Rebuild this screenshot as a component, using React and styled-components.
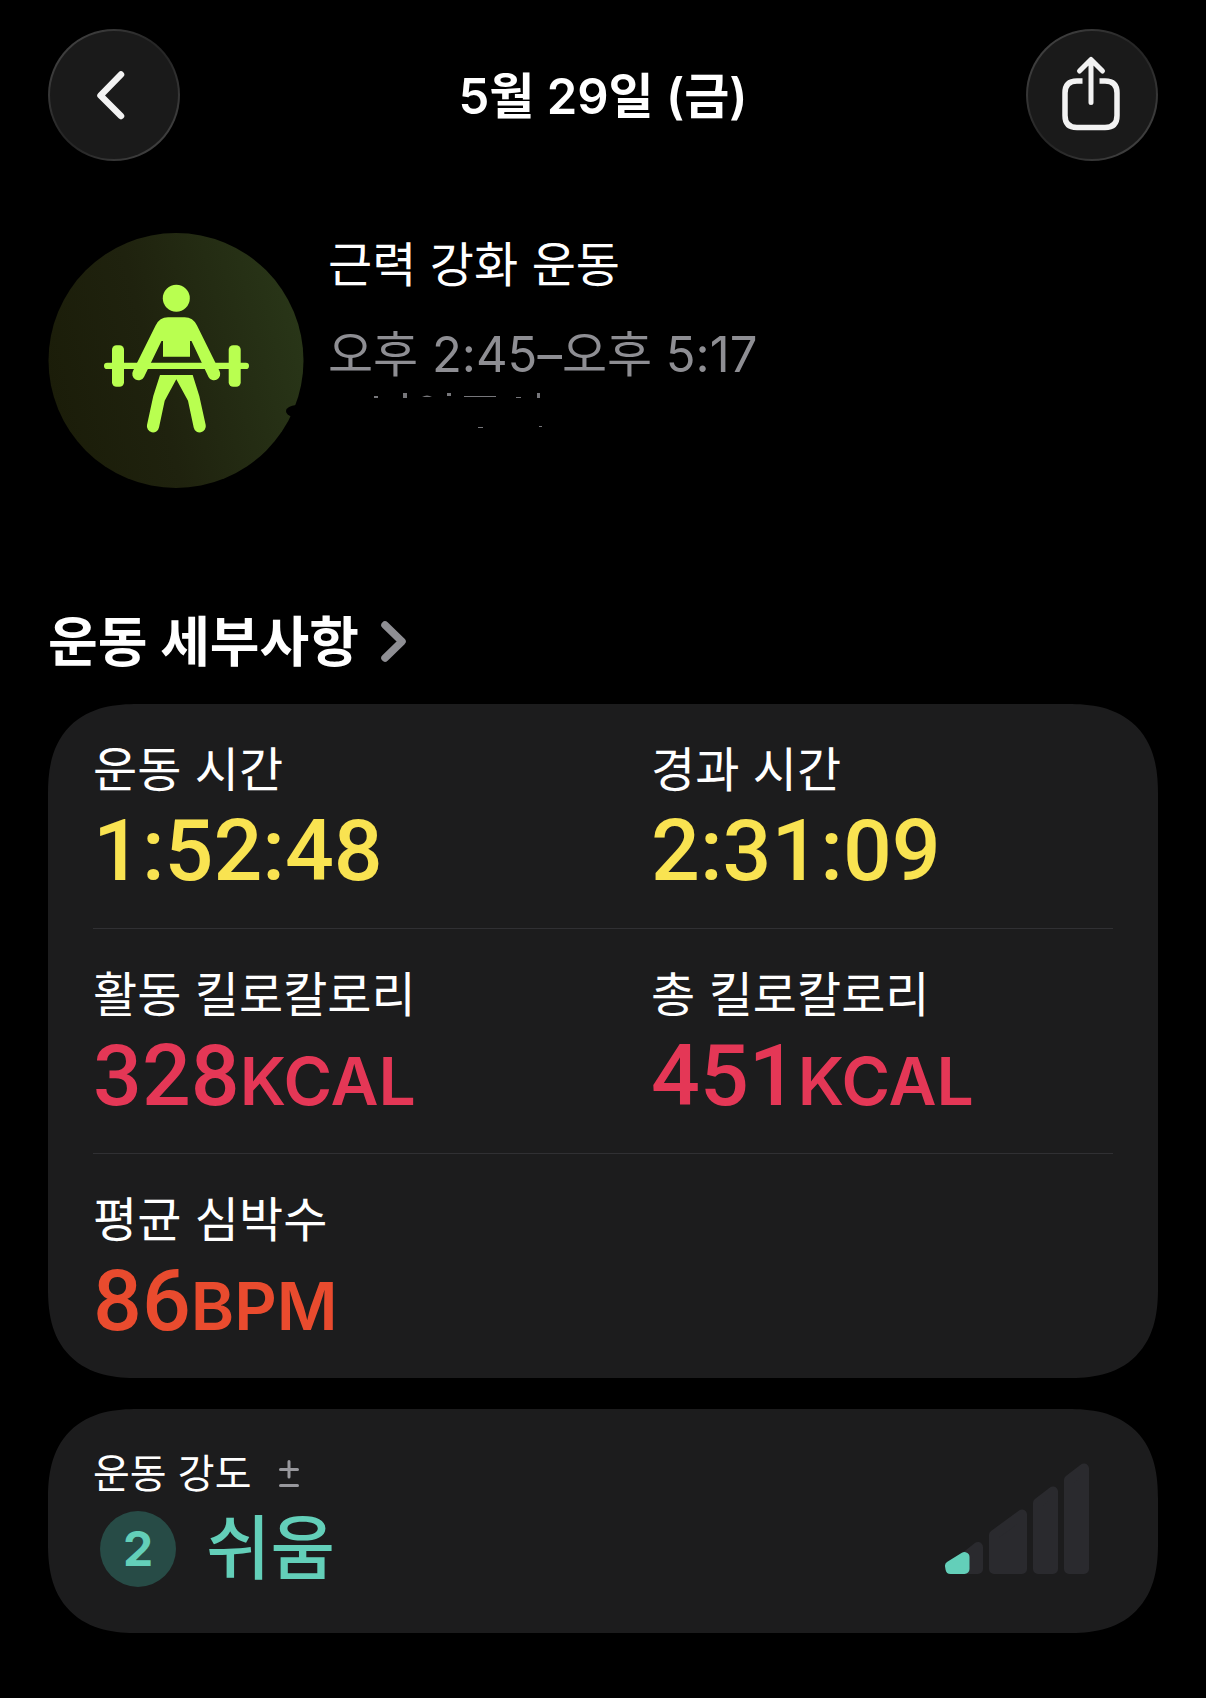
import React from 'react';
import styled, { createGlobalStyle } from 'styled-components';

const GlobalStyle = createGlobalStyle`
  * {
    box-sizing: border-box;
  }

  body {
    margin: 0;
    background: #000;
    color: #fff;
    font-family: Inter, 'Noto Sans CJK KR', sans-serif;
  }
`;

const Page = styled.div`
  padding: 29px 48px 64px;
`;

const Header = styled.header`
  display: flex;
  align-items: center;
  justify-content: space-between;
  margin-bottom: 72px;
`;

const RoundButton = styled.button`
  width: 132px;
  height: 132px;
  padding: 0;
  border: 2px solid transparent;
  border-radius: 50%;
  color: #f2f2f2;
  background:
    linear-gradient(#1a1a1a, #1a1a1a) padding-box,
    linear-gradient(135deg, #4a4a4a 0%, #262626 45%, #262626 55%, #4a4a4a 100%) border-box;
  cursor: pointer;

  svg {
    display: block;
    width: 100%;
    height: 100%;
  }
`;

const Title = styled.h1`
  margin: 0;
  padding-top: 4px;
  font-size: 49px;
  line-height: 60px;
  font-weight: 600;
`;

const Hero = styled.section`
  display: flex;
  align-items: flex-start;
  gap: 24px;
  margin-bottom: 123px;
`;

const HeroBadge = styled.svg`
  flex: none;
  width: 256px;
  height: 256px;
`;

const HeroText = styled.div`
  display: flex;
  flex-direction: column;
  padding-top: 2px;
`;

const WorkoutName = styled.h2`
  margin: 0 0 30px;
  font-size: 48px;
  line-height: 60px;
  font-weight: 400;
`;

const WorkoutTime = styled.p`
  margin: 0;
  font-size: 49px;
  line-height: 60px;
  color: #8e8e93;
`;

const HiddenPlace = styled.svg`
  width: 240px;
  height: 48px;
`;

const SectionTitle = styled.h2`
  margin: 0 0 30px;
  font-size: 54px;
  line-height: 62px;
  font-weight: 700;
`;

const SectionLink = styled.a`
  display: inline-flex;
  align-items: center;
  gap: 18px;
  color: inherit;
  text-decoration: none;
`;

const Card = styled.section`
  padding: 0 45px;
  border-radius: 74px;
  background: #1c1c1d;

  @supports (corner-shape: superellipse(1.3)) {
    border-radius: 90px;
    corner-shape: superellipse(1.3);
  }
`;

const MetricRow = styled.div`
  display: grid;
  grid-template-columns: 1fr 1fr;
  column-gap: 96px;
  padding: 36px 0 37px;

  & + & {
    border-top: 1px solid #303033;
  }
`;

const Metric = styled.dl`
  margin: 0;
`;

const MetricLabel = styled.dt`
  margin-bottom: 11px;
  font-size: 48px;
  line-height: 60px;
`;

const MetricValue = styled.dd`
  margin: 0;
  font-family: Roboto, sans-serif;
  font-size: 86px;
  line-height: 80px;
  font-weight: 500;
  white-space: nowrap;
  color: ${props => props.color};
`;

const Unit = styled.span`
  font-family: Inter, sans-serif;
  font-size: 66px;
  line-height: 1;
  font-weight: 600;
`;

const EffortCard = styled(Card)`
  display: flex;
  align-items: center;
  justify-content: space-between;
  margin-top: 31px;
  padding: 41px 69px 46px 45px;
`;

const EffortLabel = styled.div`
  display: flex;
  align-items: center;
  gap: 28px;
  margin-bottom: 13px;
  font-size: 40px;
  line-height: 48px;
`;

const EffortValue = styled.div`
  display: flex;
  align-items: center;
  gap: 30px;
  padding-left: 7px;
  font-size: 70px;
  line-height: 76px;
  font-weight: 500;
  color: #63cfb9;
`;

const EffortBadge = styled.span`
  width: 76px;
  height: 76px;
  border-radius: 50%;
  background: #274b46;
  font-size: 48px;
  font-weight: 700;
  text-align: center;
`;

const rows = [
  [
    { label: '운동 시간', value: '1:52:48', color: '#f9e351' },
    { label: '경과 시간', value: '2:31:09', color: '#f9e351' },
  ],
  [
    { label: '활동 킬로칼로리', value: '328', unit: 'KCAL', color: '#e43756' },
    { label: '총 킬로칼로리', value: '451', unit: 'KCAL', color: '#e43756' },
  ],
  [{ label: '평균 심박수', value: '86', unit: 'BPM', color: '#e94b2e' }],
];

const BackIcon = () => (
  <svg viewBox="2 2 128 128" fill="none" stroke="currentColor" strokeWidth="6.5" strokeLinecap="round" strokeLinejoin="round">
    <path d="M73 45.5 52.5 66.5 73 87" />
  </svg>
);

const ShareIcon = () => (
  <svg viewBox="2 2 128 128" fill="none" stroke="currentColor" strokeWidth="5.5">
    <path d="M56.500 52H51Q39 52 39 64V86.500Q39 98.500 51 98.500H79Q91 98.500 91 86.500V64Q91 52 79 52H73.500" />
    <path d="M65 73.500V31M53.500 42 65 30.500 76.500 42" strokeWidth="5" strokeLinecap="round" strokeLinejoin="round" />
  </svg>
);

const LifterBadge = () => (
  <HeroBadge viewBox="0 0 256 256" role="img" aria-label="근력 강화 운동">
    <defs>
      <linearGradient id="lifterBg" x1="0" y1="0.6" x2="1" y2="0.35">
        <stop offset="0" stopColor="#1b1d09" />
        <stop offset="0.4" stopColor="#1f220e" />
        <stop offset="1" stopColor="#293618" />
      </linearGradient>
    </defs>
    <circle cx="128" cy="127.500" r="127.500" fill="url(#lifterBg)" />
    <g fill="#b9ff50">
      <circle cx="128.300" cy="65.300" r="13.500" />
      <path d="M120 84.300H136.600Q145 84.300 149 92.500L171.500 138A6.200 6.200 0 0 1 160.500 144L143.500 108H142V123.700H115V108H113.500L96 144A6.200 6.200 0 0 1 85 138L107.600 92.500Q111.600 84.300 120 84.300Z" />
      <rect x="56" y="129.700" width="145" height="6.300" rx="3.100" />
      <rect x="64" y="112.300" width="12" height="41.400" rx="4.500" />
      <rect x="180.700" y="112.300" width="12" height="41.400" rx="4.500" />
      <path d="M112 142H144.700L151.300 163L157.700 192A6.100 6.100 0 0 1 145.700 194.500L140 167.700 128.300 146.300 116.700 167.700 111 194.500A6.100 6.100 0 0 1 99 192L105.300 163Z" />
    </g>
    <path d="M256 172Q244 171 238.500 176Q236.500 180 242 183L256 186Z" fill="#000" />
  </HeroBadge>
);

// location line, painted over except for a few marks along its edges
const PlaceMarks = () => (
  <HiddenPlace viewBox="0 4 240 48" fill="#77777b" aria-hidden="true">
    <rect x="46" y="15" width="4" height="2" />
    <rect x="75" y="12" width="4" height="5" />
    <path d="M94 16Q99 13 104 16Z" />
    <rect x="119" y="12" width="4" height="3" />
    <rect x="136" y="15" width="32" height="1" />
    <rect x="188" y="16" width="5" height="1" />
    <rect x="209" y="12" width="3" height="5" />
    <rect x="150" y="46" width="5" height="1" />
    <rect x="211" y="45" width="3" height="1" />
  </HiddenPlace>
);

const ChevronIcon = () => (
  <svg width="32" height="48" viewBox="0 0 32 48" fill="none" stroke="#8e8e93" strokeWidth="7.500" strokeLinecap="round" strokeLinejoin="round">
    <path d="M8 6 25 22.500 8 39" />
  </svg>
);

const PlusMinusIcon = () => (
  <svg width="20" height="28" viewBox="0 0 20 28" stroke="#98989d" strokeWidth="3" strokeLinecap="round">
    <path d="M10 1.500V17M1.500 9.500H18.500M1.500 25.500H18.500" />
  </svg>
);

const EffortChart = () => (
  <svg width="144" height="112" viewBox="0 0 144 112" strokeWidth="10" strokeLinejoin="round" aria-hidden="true">
    <g fill="#2a2a2e" stroke="#2a2a2e">
      <path d="M8 104 33 84V106H10Z" />
      <path d="M49 72 77 51.500V106H49Z" />
      <path d="M93 40 108 28.500V106H93Z" />
      <path d="M124 17 139 5.500V106H124Z" />
    </g>
    <path d="M5 103 19.500 94V106H5.500Z" fill="#63cfb9" stroke="#63cfb9" />
  </svg>
);

const App = () => (
  <>
    <GlobalStyle />
    <Page>
      <Header>
        <RoundButton type="button" aria-label="뒤로">
          <BackIcon />
        </RoundButton>
        <Title>5월 29일 (금)</Title>
        <RoundButton type="button" aria-label="공유">
          <ShareIcon />
        </RoundButton>
      </Header>

      <main>
        <Hero>
          <LifterBadge />
          <HeroText>
            <WorkoutName>근력 강화 운동</WorkoutName>
            <WorkoutTime>오후 2:45–오후 5:17</WorkoutTime>
            <PlaceMarks />
          </HeroText>
        </Hero>

        <SectionTitle>
          <SectionLink href="#details">
            운동 세부사항
            <ChevronIcon />
          </SectionLink>
        </SectionTitle>

        <Card id="details">
          {rows.map((row, i) => (
            <MetricRow key={i}>
              {row.map(({ label, value, unit, color }) => (
                <Metric key={label}>
                  <MetricLabel>{label}</MetricLabel>
                  <MetricValue color={color}>
                    {value}
                    {unit && <Unit>{unit}</Unit>}
                  </MetricValue>
                </Metric>
              ))}
            </MetricRow>
          ))}
        </Card>

        <EffortCard>
          <div>
            <EffortLabel>
              운동 강도
              <PlusMinusIcon />
            </EffortLabel>
            <EffortValue>
              <EffortBadge>2</EffortBadge>
              쉬움
            </EffortValue>
          </div>
          <EffortChart />
        </EffortCard>
      </main>
    </Page>
  </>
);

export default App;
